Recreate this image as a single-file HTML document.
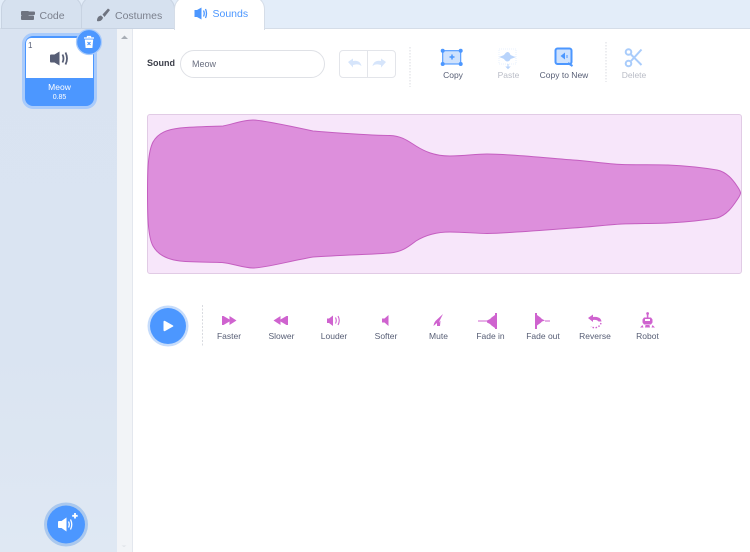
<!DOCTYPE html>
<html><head><meta charset="utf-8">
<style>
html,body{margin:0;padding:0;width:750px;height:552px;overflow:hidden;background:#fff;font-family:"Liberation Sans",sans-serif}
body{filter:blur(.3px)}
.a{position:absolute}
.t{position:absolute;font-size:8.5px;color:#575e75;text-align:center;width:70px;line-height:10px}
svg{position:absolute;overflow:visible}
</style></head><body>
<!-- top bar -->
<div class="a" style="left:0;top:0;width:750px;height:29px;background:#e3edf9;border-bottom:1px solid #d5dde8;box-sizing:border-box"></div>
<div class="a" style="left:1px;top:-4px;width:81px;height:33px;background:#d6e1ef;border:1px solid #c8d3e2;border-radius:13px 13px 0 0;box-sizing:border-box"></div>
<div class="a" style="left:81px;top:-4px;width:94px;height:33px;background:#d6e1ef;border:1px solid #c8d3e2;border-radius:13px 13px 0 0;box-sizing:border-box"></div>
<div class="a" style="left:174px;top:-4px;width:91px;height:34px;background:#fff;border:1px solid #d5dde8;border-bottom:0;border-radius:13px 13px 0 0;box-sizing:border-box"></div>
<div class="a" style="left:39.5px;top:8.5px;font-size:10.5px;line-height:14px;color:#7b808d">Code</div>
<div class="a" style="left:115px;top:8.5px;font-size:10.5px;line-height:14px;color:#7b808d">Costumes</div>
<div class="a" style="left:212.5px;top:6.5px;font-size:10.5px;line-height:14px;color:#4c97ff">Sounds</div>
<svg style="left:0;top:0" width="270" height="30">
<g fill="#6f7480"><rect x="21" y="11" width="8" height="4.500" rx="1"/><rect x="27" y="11.500" width="8" height="3.500" rx="1"/><rect x="21" y="15.500" width="13" height="4.500" rx="1"/></g>
<path d="M97 21c0-3.500 1.500-5 4-5.500l2 2c-.5 2.500-3 4.500-6 3.500zM102.500 14.500L108 8.500l2 1.500-5.500 7z" fill="#6f7480"/>
<path d="M194.500 10h2.500l4.500-2.500v12l-4.500-2.500h-2.500z" fill="#4c97ff"/>
<path d="M203.500 10.500q1.500 3 0 6M205.500 9q2 4.500 0 9" fill="none" stroke="#4c97ff" stroke-width="1.300"/>
</svg>
<!-- sidebar -->
<div class="a" style="left:0;top:29px;width:117px;height:523px;background:linear-gradient(#d9e3f1,#dae4f2 60%,#dfe8f3)"></div>
<div class="a" style="left:117px;top:29px;width:15px;height:523px;background:#f2f4f7;border-right:1px solid #e3e7ee;box-sizing:content-box"></div>
<svg style="left:117px;top:29px" width="15" height="523"><path d="M4 10l3.500-3.500L11 10z" fill="#a8adb5"/><path d="M4.500 516.500h5l-2.500 1.500z" fill="#dfe2e7"/></svg>
<!-- sprite card -->
<div class="a" style="left:22px;top:33px;width:75px;height:75.500px;border-radius:11px;background:#4c97ff;border:3px solid #a9cbfb;box-sizing:border-box;overflow:hidden">
<div class="a" style="left:1px;top:2px;width:67px;height:40px;background:#fff;border-radius:5px 5px 0 0"></div>
<div class="a" style="left:3px;top:5px;font-size:8px;line-height:10px;color:#575e75">1</div>
<div class="a" style="left:0;top:45.500px;width:69px;text-align:center;font-size:8.5px;line-height:11px;color:#fff">Meow</div>
<div class="a" style="left:0;top:56.500px;width:69px;text-align:center;font-size:7px;line-height:10px;color:#fff">0.85</div>
</div>
<svg style="left:0;top:29px" width="117" height="60">
<path d="M50 26.500q0-1 1-1h3.500l5-3v14l-5-3H51q-1 0-1-1z" fill="#575e75"/>
<path d="M62.500 25.500q2 4 0 8M65.500 23.500q3 6 0 12" fill="none" stroke="#575e75" stroke-width="1.800"/>
<circle cx="89" cy="13" r="12.500" fill="#4c97ff" stroke="#a9cbfb" stroke-width="1.300"/>
<path d="M84 9h10M87.500 9V7.500h3V9" fill="none" stroke="#fff" stroke-width="1.300"/>
<path d="M84.800 10.500h8.400l-.8 8.500h-6.800z" fill="#fff"/>
<path d="M87.500 13l3 3M90.500 13l-3 3" stroke="#4c97ff" stroke-width="1.100"/>
</svg>
<!-- add sound button -->
<svg style="left:40px;top:500px" width="54" height="50">
<circle cx="26" cy="24.500" r="22" fill="#aac8ee"/>
<circle cx="26" cy="24.500" r="19" fill="#4c97ff"/>
<path d="M18 22q0-1 1-1h2.500l5-3.500v14l-5-3.500H19q-1 0-1-1z" fill="#fff"/>
<path d="M28.500 21.500q1.500 3 0 6M30.500 19.500q2.500 5 0 10" fill="none" stroke="#fff" stroke-width="1.300"/>
<path d="M35 13v5.500M32.200 15.800h5.500" stroke="#fff" stroke-width="1.800"/>
</svg>
<!-- sound name -->
<div class="a" style="left:147px;top:57px;font-size:9px;line-height:12px;font-weight:bold;color:#3c3f4a">Sound</div>
<div class="a" style="left:180px;top:50px;width:145px;height:28px;border:1px solid #dfe1e6;border-radius:14px;box-sizing:border-box"></div>
<div class="a" style="left:192px;top:57.500px;font-size:9px;line-height:12px;color:#6a6f80">Meow</div>
<!-- undo redo -->
<div class="a" style="left:339px;top:50px;width:57px;height:28px;border:1px solid #e3e5ea;border-radius:4px;box-sizing:border-box"></div>
<div class="a" style="left:367px;top:50px;width:1px;height:28px;background:#e3e5ea"></div>
<svg style="left:330px;top:35px" width="330" height="60">
<path d="M18 27l5-3.500V26c4-1 7.500.500 8.500 5-2-1.500-3.500-2-6-1.500l-2.500.500v2.500z" fill="#d6e5fb"/>
<path d="M56 27l-5-3.500V26c-4-1-7.500.500-8.500 5 2-1.500 3.500-2 6-1.500l2.500.500v2.500z" fill="#d6e5fb"/>
<path d="M80 12v40M276 7v40" stroke="#d9dbe0" stroke-width="1" stroke-dasharray="1.500 1.500"/>
<!-- copy -->
<rect x="112.700" y="15.700" width="18" height="13.300" fill="#cfe2fd" stroke="#4c97ff" stroke-width="1.100"/>
<g fill="#4c97ff"><circle cx="112.700" cy="15.700" r="2"/><circle cx="130.700" cy="15.700" r="2"/><circle cx="112.700" cy="29" r="2"/><circle cx="130.700" cy="29" r="2"/></g>
<path d="M122 19.500v5M119.500 22h5" stroke="#4c97ff" stroke-width="1.500"/>
<!-- paste -->
<rect x="169" y="14" width="17" height="15" fill="none" stroke="#e2edfd" stroke-width=".8" stroke-dasharray="1 1"/>
<path d="M169 22q3-1 5-2 2-3 3.500-3 2 0 3 3 3 1.500 5.500 2-2.500 1-5.500 2-1 2.500-3 2.500T174 24q-2-1-5-2z" fill="#b9d4fb"/>
<path d="M178 29v2.500M176.500 32l1.500 1.500 1.500-1.500z" stroke="#b9d4fb" fill="#b9d4fb"/>
<!-- copy to new -->
<rect x="225.500" y="13.500" width="16" height="15.500" rx="2" fill="#cfe2fd" stroke="#4c97ff" stroke-width="2"/>
<path d="M230.500 21l4.500-3.500v7z" fill="#4c97ff"/>
<path d="M237 20v3" stroke="#4c97ff" stroke-width="1"/>
<path d="M238 28l4.500 3" stroke="#4c97ff" stroke-width="2"/>
<!-- delete -->
<g fill="none" stroke="#a9ccfb" stroke-width="2"><circle cx="298.500" cy="17" r="2.800"/><circle cx="298.500" cy="28.500" r="2.800"/><path d="M301 19.500l10.500 10.500M301 26l10.500-11.500"/></g>
</svg>
<div class="t" style="left:418px;top:70px">Copy</div>
<div class="t" style="left:473.500px;top:70px;color:#b9bcc6">Paste</div>
<div class="t" style="left:529px;top:70px">Copy to New</div>
<div class="t" style="left:599px;top:70px;color:#b9bcc6">Delete</div>
<!-- waveform -->
<div class="a" style="left:146.500px;top:114px;width:595px;height:160px;background:#f7e6fa;border:1px solid #e1cbe5;border-radius:3px;box-sizing:border-box"></div>
<svg style="left:0;top:0" width="750" height="552">
<path d="M147.500 193C147.500 170 148 152 153 142C158 133 167 129.500 180 128C195 126.500 212 126.500 223 126C233 124 243 120 253 120C262 120 290 126 313 131C340 133 370 135.500 390 135.500C402 136 408 141 416 146C424 151 434 156 450 156C465 156 475 154 487 154C510 154 545 158 573 160C590 161 605 164 622 164.500C640 165 655 164.500 668 165C690 166 705 168 717 170C727 172 733 180 737 186C739 189 740.500 191 740.500 193C740.500 195 739 197 737 200C733 206 727 215 717 218C705 220 690 222 668 223C655 223.500 640 223.500 622 224C605 225 590 227 573 228C545 230 510 233 487 233.500C475 233.500 465 232 450 232C434 232 424 236 416 241C408 247 402 252 390 253C370 254.500 340 255 313 257C290 261 265 268 253 268C243 268 233 263.500 222 262.500C212 262 195 262.500 180 261C167 259.500 158 255 153 246C148 237 147.500 216 147.500 193Z" fill="#dd8fdc" stroke="#c45ec0" stroke-width="1"/>
<!-- bottom controls -->
<circle cx="168" cy="326" r="20.500" fill="#c6dcfb"/>
<circle cx="168" cy="326" r="18" fill="#4c97ff"/>
<path d="M163.500 322q0-1.800 1.600-1l7.500 4.200q1.500 .8 0 1.600l-7.500 4.200q-1.600 .8-1.600-1z" fill="#fff"/>
<path d="M202.500 305v42" stroke="#d9dbe0" stroke-dasharray="2 1.500"/>
<g fill="#cf63cf">
<path d="M222 316h1.500l6 3.500V316l7 4.500-7 4.500v-3.500l-6 3.500H222z"/>
<path d="M288 316h-1.500l-6 3.500V316l-7 4.500 7 4.500v-3.500l6 3.500h1.500z"/>
<path d="M327 318.500h2l4-3v10.500l-4-3h-2z"/>
<path d="M382 318.500h2.500l4-3.500v11l-4-3.500H382z"/>
<path d="M433.500 326q.5-4 3-6l6.500-6-3.500 7-1 5h-1.500v-3z"/>
<path d="M440.500 320.500l-.5 5.500h-3z"/>
<path d="M487 320.500l3-1.500 1.500-1.500 3.500-2.500v13l-3.500-2.500-1.500-1.500-3-1.500z"/>
<rect x="495" y="313" width="2" height="16"/>
<path d="M537 315l3.500 2.500 1.500 1.500 3 1.500-3 1-1.500 1.500-3.500 2.500z"/>
<rect x="535" y="313" width="2" height="16"/>
<path d="M588 318l5-3.500v2.500c4-.5 8 .5 8.500 4.500h-3c-1-1.500-3-1.800-5.500-1.500v2z"/>
<path d="M644 317.500h7l1.500 2v3l-1.500 2h-7l-1.500-2v-3z"/>
<rect x="646.800" y="313.500" width="1.600" height="4"/>
<circle cx="647.600" cy="313.500" r="1.400"/>
<path d="M642.500 325l-2.500 2.500h3.500zM652.500 325l2.500 2.500h-3.500zM645.500 325h4l.5 2.500h-5z"/>
</g>
<path d="M335.500 317.500q1.500 3 0 6M338 316q2.500 4.500 0 9" fill="none" stroke="#cf63cf" stroke-width="1.100"/>
<path d="M478 321h9M545 321h5" stroke="#cf63cf" stroke-width="1"/>
<rect x="645" y="319" width="5" height="2" fill="#fff"/>
<path d="M601 323a6.500 6.500 0 0 1-10 3.500" fill="none" stroke="#cf63cf" stroke-width="1.400" stroke-dasharray="1.500 1.500"/>
</svg>
<div class="t" style="left:194px;top:331px">Faster</div>
<div class="t" style="left:246.500px;top:331px">Slower</div>
<div class="t" style="left:299px;top:331px">Louder</div>
<div class="t" style="left:351px;top:331px">Softer</div>
<div class="t" style="left:403.500px;top:331px">Mute</div>
<div class="t" style="left:455.500px;top:331px">Fade in</div>
<div class="t" style="left:508px;top:331px">Fade out</div>
<div class="t" style="left:560px;top:331px">Reverse</div>
<div class="t" style="left:612.500px;top:331px">Robot</div>
</body></html>
